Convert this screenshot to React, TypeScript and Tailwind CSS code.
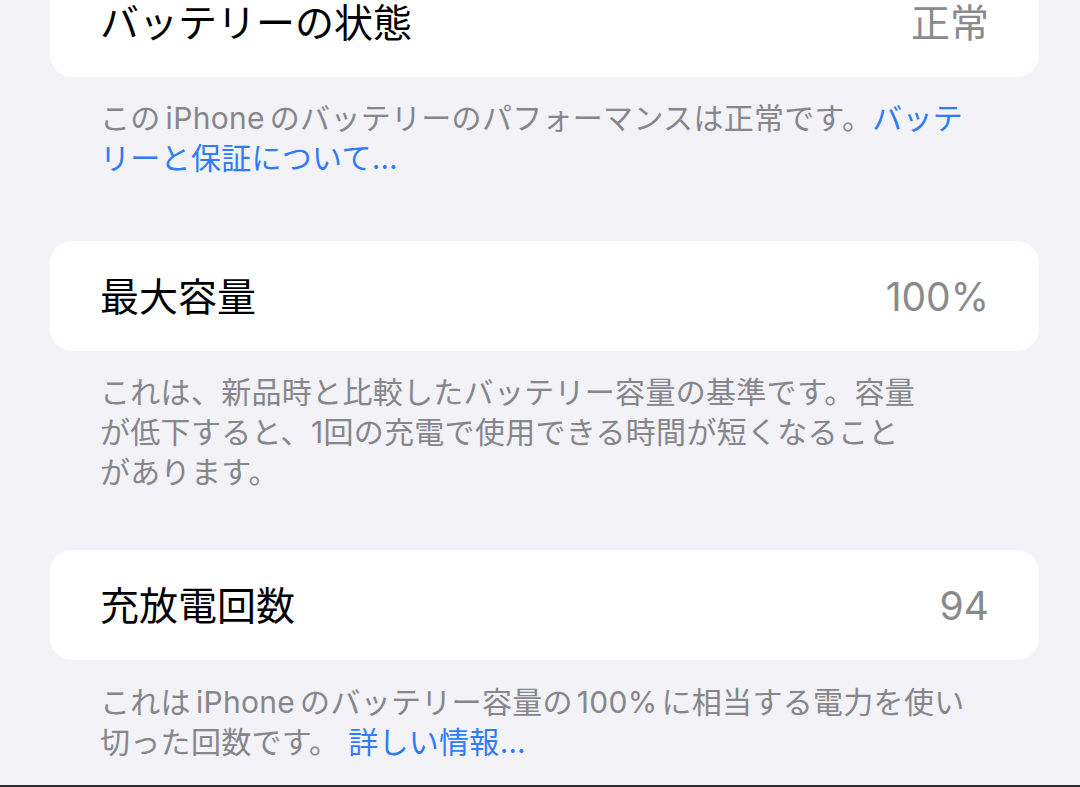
import React from "react";

const font = { fontFamily: 'Inter, "Noto Sans CJK JP", "Noto Sans", sans-serif' };

function Card({ title, value, className = "" }: { title: string; value: string; className?: string }) {
  return (
    <div className={"h-[110px] bg-white rounded-[22px] flex items-center justify-between pl-[50px] pr-[50px] " + className}>
      <span className="text-[39px] text-black leading-none">{title}</span>
      <span className="text-[39px] text-[#8a8a8e] leading-none">{value}</span>
    </div>
  );
}

function Caption({ lines, className = "" }: { lines: React.ReactNode[]; className?: string }) {
  return (
    <div className={"px-[50px] text-[30px] leading-[40px] tracking-[0.3px] text-[#86868b] " + className}>
      {lines.map((l, i) => (
        <div key={i} className="whitespace-nowrap">
          {l}
        </div>
      ))}
    </div>
  );
}

const Link = ({ children }: { children: React.ReactNode }) => (
  <span className="text-[#2f7cf6]">{children}</span>
);

const IPhone = () => <span className="mx-[5px]">iPhone</span>;

export default function App() {
  return (
    <div className="w-[1080px] h-[787px] bg-[#f2f2f7] overflow-hidden flex flex-col" style={font}>
      <div className="flex-1 pl-[50px] pr-[41px]">
        <Card title="バッテリーの状態" value="正常" className="-mt-[33px]" />
        <Caption
          className="mt-[21px]"
          lines={[
            <>
              この<IPhone />のバッテリーのパフォーマンスは正常です。<Link>バッテ</Link>
            </>,
            <Link>リーと保証について…</Link>,
          ]}
        />
        <Card title="最大容量" value="100%" className="mt-[63px]" />
        <Caption
          className="mt-[21px]"
          lines={[
            "これは、新品時と比較したバッテリー容量の基準です。容量",
            "が低下すると、1回の充電で使用できる時間が短くなること",
            "があります。",
          ]}
        />
        <Card title="充放電回数" value="94" className="mt-[58px]" />
        <Caption
          className="mt-[22px]"
          lines={[
            <>
              これは<IPhone />のバッテリー容量の<span className="mx-[4px]">100%</span>に相当する電力を使い
            </>,
            <>
              切った回数です。 <Link>詳しい情報…</Link>
            </>,
          ]}
        />
      </div>
      <div className="h-[2px] bg-[#2c2c2e]" />
    </div>
  );
}
